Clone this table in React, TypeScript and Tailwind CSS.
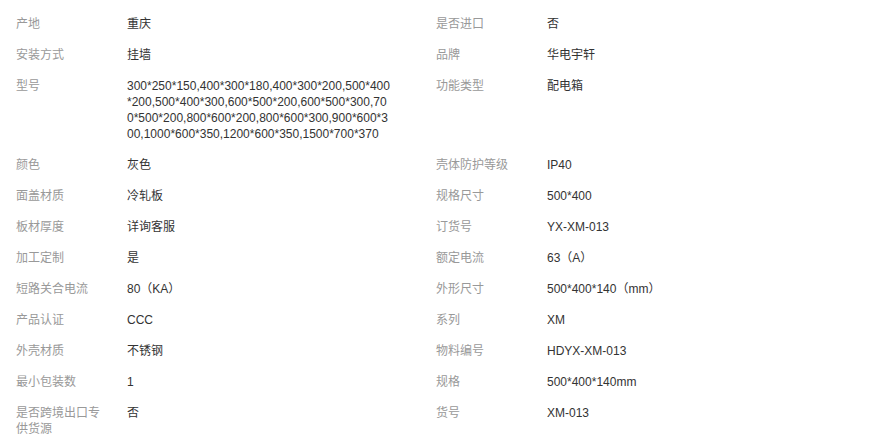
const items: Array<[string, string]> = [
  ["产地", "重庆"],
  ["是否进口", "否"],
  ["安装方式", "挂墙"],
  ["品牌", "华电宇轩"],
  ["型号", "300*250*150,400*300*180,400*300*200,500*400*200,500*400*300,600*500*200,600*500*300,700*500*200,800*600*200,800*600*300,900*600*300,1000*600*350,1200*600*350,1500*700*370"],
  ["功能类型", "配电箱"],
  ["颜色", "灰色"],
  ["壳体防护等级", "IP40"],
  ["面盖材质", "冷轧板"],
  ["规格尺寸", "500*400"],
  ["板材厚度", "详询客服"],
  ["订货号", "YX-XM-013"],
  ["加工定制", "是"],
  ["额定电流", "63（A）"],
  ["短路关合电流", "80（KA）"],
  ["外形尺寸", "500*400*140（mm）"],
  ["产品认证", "CCC"],
  ["系列", "XM"],
  ["外壳材质", "不锈钢"],
  ["物料编号", "HDYX-XM-013"],
  ["最小包装数", "1"],
  ["规格", "500*400*140mm"],
  ["是否跨境出口专供货源", "否"],
  ["货号", "XM-013"],
]

export default function App() {
  return (
    <main
      className="min-h-screen bg-white pt-2 pl-4 text-[12px] leading-4"
      style={{ fontFamily: '"Liberation Sans", Arial, "Noto Sans CJK SC", sans-serif' }}
    >
      <div className="grid grid-cols-[420px_420px]">
        {items.map(([label, value], index) => (
          <div key={index} className="flex pt-2 pb-[7px]">
            <span className="w-[90px] mr-[21px] shrink-0 text-[#999]">{label}</span>
            <span className="w-[264px] break-all text-[#333]">{value}</span>
          </div>
        ))}
      </div>
    </main>
  )
}
